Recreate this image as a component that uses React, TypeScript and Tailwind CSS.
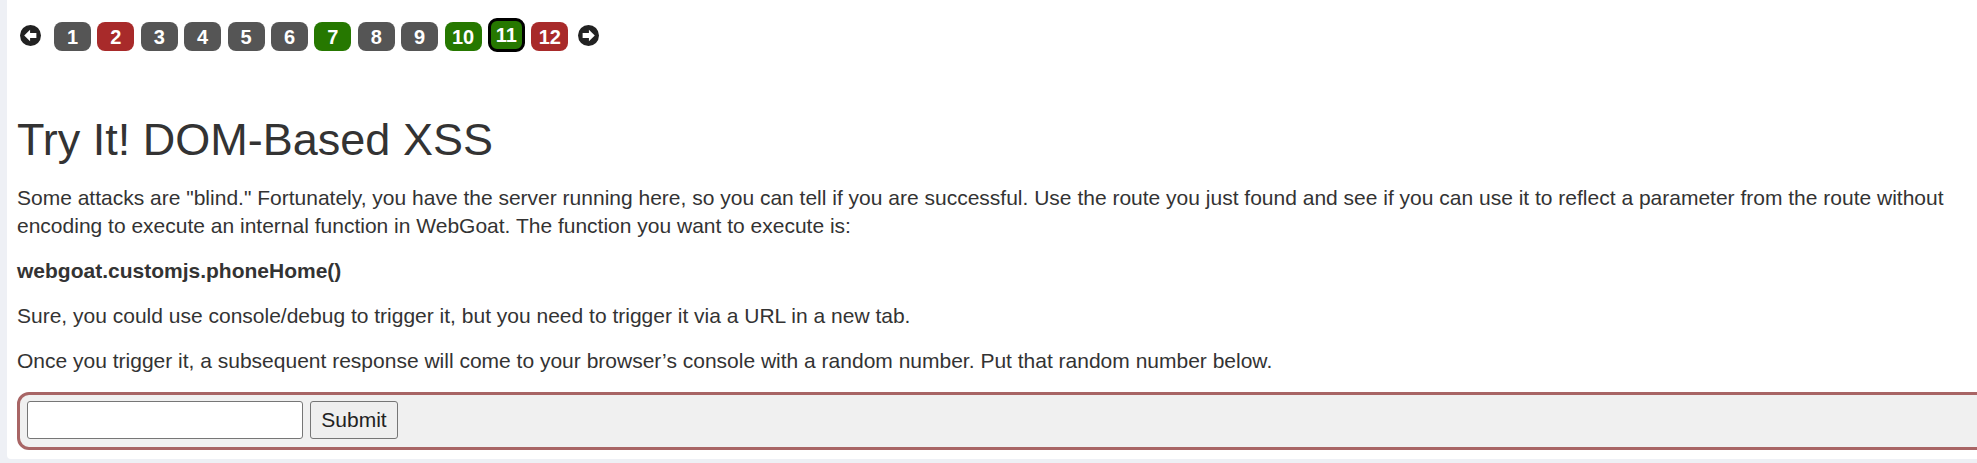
import React from "react";

const pages: { n: number; c: string; active?: boolean }[] = [
  { n: 1, c: "bg-[#555555]" },
  { n: 2, c: "bg-[#a82a2a]" },
  { n: 3, c: "bg-[#555555]" },
  { n: 4, c: "bg-[#555555]" },
  { n: 5, c: "bg-[#555555]" },
  { n: 6, c: "bg-[#555555]" },
  { n: 7, c: "bg-[#267800]" },
  { n: 8, c: "bg-[#555555]" },
  { n: 9, c: "bg-[#555555]" },
  { n: 10, c: "bg-[#267800]" },
  { n: 11, c: "bg-[#267800]", active: true },
  { n: 12, c: "bg-[#a82a2a]" },
];

function ArrowCircle({ dir }: { dir: "left" | "right" }) {
  return (
    <svg width="21" height="21" viewBox="0 0 20 20" className="block">
      <circle cx="10" cy="10" r="10" fill="#222222" />
      <path
        d="M4 10 L9.6 4.6 L9.6 7.7 L15.6 7.7 L15.6 12.3 L9.6 12.3 L9.6 15.4 Z"
        fill="#ffffff"
        transform={dir === "right" ? "rotate(180 10 10)" : undefined}
      />
    </svg>
  );
}

export default function App() {
  return (
    <div
      className="h-[463px] w-full overflow-hidden bg-[#eef0f5] pl-[7px]"
      style={{ fontFamily: '"Liberation Sans", Arial, sans-serif' }}
    >
      <div className="h-[459px] w-[calc(100%+40px)] rounded-bl-[4px] bg-white pl-[10px] pt-[18px] text-[#333333]">
        <div className="flex h-[34px] items-start">
          <div className="ml-[3px] mr-[13px] mt-[7px]">
            <ArrowCircle dir="left" />
          </div>
          <div className="flex gap-[6.4px]">
            {pages.map((p) =>
              p.active ? (
                <div
                  key={p.n}
                  className={`flex h-[34px] w-[37px] items-center justify-center rounded-[9px] border-[3px] border-black ${p.c} text-[20px] font-bold text-white`}
                >
                  {p.n}
                </div>
              ) : (
                <div
                  key={p.n}
                  className={`mt-[4px] flex h-[29px] w-[37px] items-center justify-center rounded-[8px] ${p.c} text-[20px] font-bold text-white`}
                >
                  {p.n}
                </div>
              )
            )}
          </div>
          <div className="ml-[10px] mt-[7px]">
            <ArrowCircle dir="right" />
          </div>
        </div>

        <h2 className="mt-[64px] text-[45px] font-normal leading-[48px]">
          Try It! DOM-Based XSS
        </h2>

        <div className="mt-[20px] pr-[50px] text-[21px] leading-[28px]">
          <p className="mb-[17px]">
            Some attacks are "blind." Fortunately, you have the server running here, so you can tell if you are
            successful. Use the route you just found and see if you can use it to reflect a parameter from the route
            without encoding to execute an internal function in WebGoat. The function you want to execute is:
          </p>
          <p className="mb-[17px] font-bold">webgoat.customjs.phoneHome()</p>
          <p className="mb-[17px]">
            Sure, you could use console/debug to trigger it, but you need to trigger it via a URL in a new tab.
          </p>
          <p className="mb-[17px]">
            Once you trigger it, a subsequent response will come to your browser’s console with a random number. Put
            that random number below.
          </p>
        </div>

        <div className="flex w-[2100px] gap-[7px] rounded-[12px] border-[3px] border-[#a86565] bg-[#f0f0f0] pb-[8px] pl-[7px] pt-[6px]">
          <input
            type="text"
            className="h-[38px] w-[276px] rounded-[3px] border border-[#767676] bg-white px-1 text-[21px] outline-none"
          />
          <button className="h-[38px] w-[88px] rounded-[3px] border border-[#767676] bg-[#efefef] text-[21px] text-[#222222]">
            Submit
          </button>
        </div>
      </div>
    </div>
  );
}
